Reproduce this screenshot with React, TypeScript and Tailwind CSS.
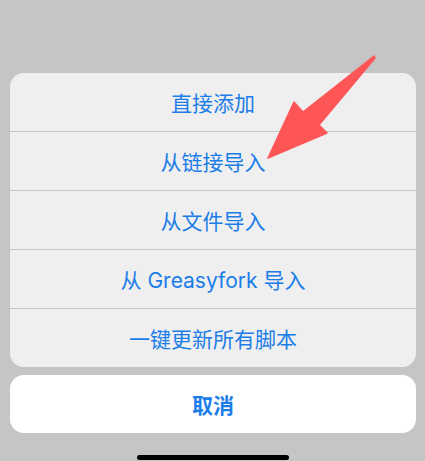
import React from 'react';

const actions = ['直接添加', '从链接导入', '从文件导入', '从 Greasyfork 导入', '一键更新所有脚本'];

const PointerArrow = () => (
  <svg className="absolute left-0 top-0 pointer-events-none" width="425" height="461" viewBox="0 0 425 461">
    <polygon
      points="374,56 375,58 319,125 327,133 268,158 294,102 303,112"
      fill="#fe5656"
      stroke="#fe5656"
      strokeWidth="1.5"
      strokeLinejoin="round"
    />
  </svg>
);

export default function App() {
  return (
    <div
      className="relative w-[425px] h-[461px] overflow-hidden bg-[#c5c5c5] flex flex-col"
      style={{ fontFamily: 'Inter, "Noto Sans CJK SC", sans-serif' }}
    >
      <div className="h-[73px] shrink-0" />

      {/* Action sheet */}
      <div className="mx-[10px] w-[406px] rounded-[14px] bg-[#efefef] overflow-hidden">
        {actions.map((label, i) => (
          <div key={label}>
            {i > 0 && <div className="h-px bg-[#c6c6c6]" />}
            <div className="h-[58px] flex items-center justify-center text-[21px] text-[#1b7de8] pt-[3px]">
              {label}
            </div>
          </div>
        ))}
      </div>

      {/* Cancel */}
      <div className="mx-[10px] mt-[8px] w-[406px] h-[58px] rounded-[14px] bg-white flex items-center justify-center text-[21px] font-semibold text-[#1b7de8] pt-[3px]">
        取消
      </div>

      {/* Home indicator */}
      <div className="flex-1 flex items-end justify-center pb-[1px]">
        <div className="w-[152px] h-[5px] rounded-full bg-black" />
      </div>

      <PointerArrow />
    </div>
  );
}
